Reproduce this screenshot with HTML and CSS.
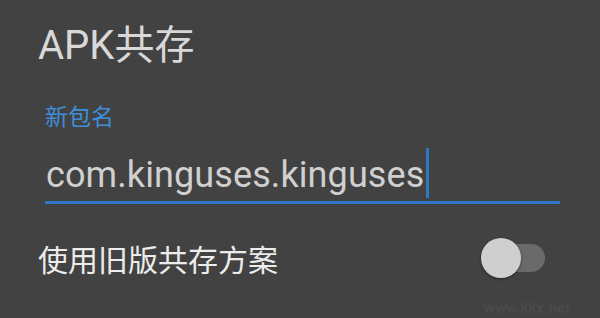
FILE: index.html
```html
<!DOCTYPE html>
<html lang="zh-CN">
<head>
  <meta charset="UTF-8" />
  <meta name="viewport" content="width=device-width, initial-scale=1.0" />
  <title>APK共存</title>
  <link rel="stylesheet" href="styles.css">
</head>
<body>
  <section class="dialog">
    <h1 class="dialog-title">APK共存</h1>

    <div class="field">
      <div class="field-label">新包名</div>
      <div class="field-input"><span class="field-value">com.kinguses.kinguses</span><span class="caret"></span></div>
    </div>

    <div class="option-row">
      <span class="option-label">使用旧版共存方案</span>
      <div class="switch">
        <div class="switch-track"></div>
        <div class="switch-thumb"></div>
      </div>
    </div>

    <div class="watermark">www.kkx.net</div>
  </section>
</body>
</html>
```

FILE: styles.css
```css
body {
  margin: 0;
  font-family: Roboto, "Noto Sans CJK SC", sans-serif;
  background: #424242;
  color: #d6d6d6;
}
.dialog {
  position: relative;
  height: 318px;
  padding-left: 38px;
  overflow: hidden;
  box-sizing: border-box;
}
.dialog-title {
  margin: 0;
  padding-top: 22px;
  font-size: 40px;
  line-height: 47px;
  font-weight: 400;
  color: #d8d8d8;
}
.field {
  margin-left: 7px;
  margin-right: 40px;
}
.field-label {
  margin-top: 35px;
  font-size: 23px;
  line-height: 28px;
  color: #3f8fd8;
}
.field-input {
  margin-top: 21px;
  padding-left: 1px;
  padding-bottom: 3px;
  font-size: 36px;
  line-height: 44px;
  color: #d0d0d0;
  border-bottom: 3px solid #2e77c4;
}
.field-value {
  letter-spacing: 0.1px;
}
.caret {
  display: inline-block;
  width: 3px;
  height: 50px;
  margin-top: -6px;
  margin-left: 2px;
  vertical-align: -11px;
  background: #2e77c4;
}
.option-row {
  display: flex;
  justify-content: space-between;
  align-items: flex-start;
  margin-top: 39px;
  padding-right: 55px;
}
.option-label {
  font-size: 30px;
  line-height: 36px;
  color: #ececec;
}
.switch {
  position: relative;
  width: 64px;
  height: 40px;
  margin-top: -5px;
}
.switch-track {
  position: absolute;
  right: 0;
  top: 6px;
  width: 56px;
  height: 28px;
  border-radius: 14px;
  background: #6a6a6a;
}
.switch-thumb {
  position: absolute;
  left: 0;
  top: 0;
  width: 40px;
  height: 40px;
  border-radius: 50%;
  background: #cfcfcf;
  box-shadow: 0 1px 3px rgba(0, 0, 0, 0.45);
}
.watermark {
  position: absolute;
  right: 30px;
  bottom: 1px;
  font-size: 15px;
  line-height: 17px;
  font-weight: bold;
  color: #4a4a4a;
}
```
